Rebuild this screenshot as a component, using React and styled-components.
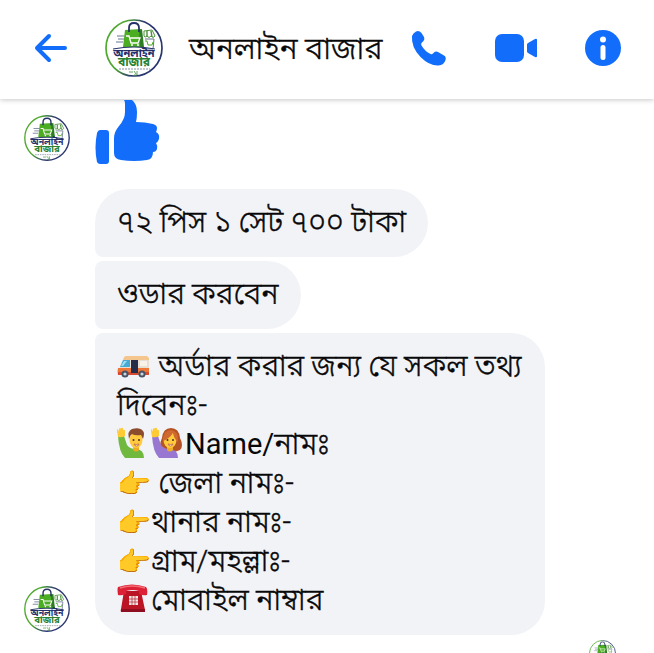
import React from 'react';
import styled, { createGlobalStyle } from 'styled-components';

const BLUE = '#126dfb';

const GlobalStyle = createGlobalStyle`
  *, *::before, *::after { box-sizing: border-box; }
  body {
    margin: 0;
    background: #fff;
    color: #080809;
    font-family: Roboto, "Noto Sans Bengali", "Noto Sans", sans-serif;
    font-weight: 300;
    -webkit-text-stroke: 0.4px;
  }
`;

const Page = styled.div`
  display: flex;
  flex-direction: column;
  height: 100vh;
  overflow: hidden;
`;

const Header = styled.header`
  display: flex;
  align-items: center;
  flex-shrink: 0;
  padding: 19px 33px 22px;
  background: #fff;
  box-shadow: 0 1px 5px rgba(0, 0, 0, 0.22);
`;

const IconButton = styled.button`
  display: flex;
  padding: 0;
  border: 0;
  background: none;
  color: ${BLUE};
  cursor: pointer;
`;

const Profile = styled.div`
  display: flex;
  flex: 1;
  align-items: center;
  gap: 26px;
  min-width: 0;
  margin-left: 36px;
`;

const Title = styled.h1`
  margin: 0;
  font-size: 31px;
  font-weight: 300;
  line-height: 39px;
  white-space: nowrap;
`;

const Actions = styled.nav`
  display: flex;
  align-items: center;
  gap: 48px;
`;

const Thread = styled.main`
  display: flex;
  flex: 1;
  flex-direction: column;
  gap: 25px;
  min-height: 0;
  padding: 1px 36px 0 24px;
`;

const MessageRow = styled.section`
  display: flex;
  flex-shrink: 0;
  align-items: flex-end;
  gap: 25px;
`;

const AvatarSvg = styled.svg`
  display: block;
  flex-shrink: 0;
  width: ${({ $size }) => $size}px;
  height: ${({ $size }) => $size}px;
  margin-bottom: ${({ $lift }) => ($lift ? 3 : 0)}px;
  -webkit-text-stroke: 0;
`;

const Stack = styled.div`
  display: flex;
  flex: 1;
  flex-direction: column;
  align-items: flex-start;
  gap: 4px;
  min-width: 0;
`;

const corners = {
  first: '34px 34px 34px 8px',
  middle: '8px 34px 34px 8px',
  last: '8px 34px 34px 34px',
};

const Bubble = styled.p`
  max-width: 450px;
  margin: 0;
  padding: 13px 22px 16px;
  border-radius: ${({ $place }) => corners[$place]};
  background: #f2f3f7;
  font-size: 30px;
  line-height: 39px;
`;

const Line = styled.span`
  display: block;
`;

const Latin = styled.span`
  font-size: 29px;
  font-weight: 400;
  line-height: 1;
  -webkit-text-stroke: 0;
`;

const Emoji = styled.span`
  font-size: 27px;
  line-height: 1;
`;

const EmojiSvg = styled.svg`
  width: 32px;
  height: 32px;
  margin-right: 2px;
  vertical-align: -5px;
`;

const Seen = styled.div`
  display: flex;
  justify-content: flex-end;
  flex-shrink: 0;
  margin-top: -20px;
  padding-right: 2px;
`;

function Avatar({ size, lift, id }) {
  return (
    <AvatarSvg $size={size} $lift={lift} viewBox="0 0 58 58" role="img" aria-label="অনলাইন বাজার">
      <defs>
        <linearGradient id={id} x1="0" y1="0" x2="1" y2="0.25">
          <stop offset="0.35" stopColor="#4fa82f" />
          <stop offset="0.65" stopColor="#29366f" />
        </linearGradient>
      </defs>
      <circle cx="29" cy="29" r="28" fill="#fff" stroke={`url(#${id})`} strokeWidth="1.7" />
      <path d="M12 17h8M13 20h6M11 23h7" stroke="#68728f" strokeWidth="1" />
      <path d="M20 11l16-1 1 18H18z" fill="#4bad22" />
      <path d="M34 11l3-1 2 18h-4z" fill="#2d7d25" />
      <path d="M24 13V9q0-5 5-5t5 5v4" fill="none" stroke="#253366" strokeWidth="1.8" />
      <path d="M21 17h3l2 7h7l2-5H25" fill="none" stroke="#fff" strokeWidth="1.3" />
      <circle cx="27" cy="26" r="1" fill="#fff" />
      <circle cx="33" cy="26" r="1" fill="#fff" />
      <path d="M39 12l8-1 3 6q-2 3-4 0-2 3-4 0-2 2-3 0z" fill="#fff" stroke="#4a9138" />
      <path d="M42 12v6M46 12l1 6" stroke="#4a9138" strokeWidth="1.4" />
      <path d="M40 20h9l-1 10h-8" fill="none" stroke="#68728f" />
      <path d="M40 22h2l1 4h4l1-3" fill="none" stroke="#4bad22" />
      <path d="M8 30q21-4 42 0" fill="none" stroke="#29366f" strokeWidth="1.2" />
      <text x="29" y="38" textAnchor="middle" fontSize="11" fontWeight="700" fontFamily='"Noto Sans Bengali", sans-serif' fill="#252e69">অনলাইন</text>
      <text x="29" y="47" textAnchor="middle" fontSize="12" fontWeight="700" fontFamily='"Noto Sans Bengali", sans-serif' fill="#28802e">বাজার</text>
      <path d="M14 50h31" stroke="#7c8798" strokeWidth="0.9" strokeDasharray="2 1" />
      <path d="M24 53h4m1-1l2 3m1-3v4h-3" fill="none" stroke="#519850" strokeWidth="0.9" />
    </AvatarSvg>
  );
}

const BackIcon = () => (
  <svg width="36" height="36" viewBox="0 0 36 36" fill="none" stroke="currentColor" strokeWidth="4" strokeLinecap="round" strokeLinejoin="round" aria-hidden="true">
    <path d="M16 6L4 18l12 12M4 18h28" />
  </svg>
);

const PhoneIcon = () => (
  <svg width="36" height="36" viewBox="0 0 36 36" fill="currentColor" aria-hidden="true">
    <path d="M1 6Q2 3 5 1.500Q8 0 10.500 3L13 7q1 2-.5 4l-2 2q-.7 1 0 2.500 3.500 6 9 8.500 1.500.7 2.500-.4l1-1q1.500-1.700 4-.6l6 3.500q2.500 1.500 1.500 4.500-1.500 5-7 5.500-9 .5-18-8.500Q0 17 1 6z" />
  </svg>
);

const VideoIcon = () => (
  <svg width="42" height="36" viewBox="0 0 42 36" fill="currentColor" aria-hidden="true">
    <rect x="0" y="4" width="29" height="28" rx="7" />
    <path d="M33 13l7-4q2-1 2 1v16q0 2-2 1l-7-4q-1-.6-1-1.500v-7q0-1 1-1.500z" />
  </svg>
);

const InfoIcon = () => (
  <svg width="36" height="36" viewBox="0 0 36 36" aria-hidden="true">
    <circle cx="18" cy="18" r="18" fill="currentColor" />
    <circle cx="18" cy="9.500" r="3" fill="#fff" />
    <rect x="15.500" y="15" width="5" height="15" rx="2.500" fill="#fff" />
  </svg>
);

const ThumbIcon = () => (
  <svg width="66" height="64" viewBox="0 0 66 64" fill={BLUE} role="img" aria-label="Like">
    <path d="M5 30h6q3 0 3 3v28q0 3-3 3H5q-2 0-3-2-3-14 0-29 1-3 3-3z" />
    <path d="M29 0h8q5 4 5 12 0 6-1 10 9 0 17 2 4 1 4 4 0 2-1 4 4 2 3 7-1 3-3 4 2 3 1 6-1 3-4 3 0 7-6 8-13 2-26 0-7-1-7-7V38q0-6 5-12 6-7 6-14V4q0-3-1-4z" />
  </svg>
);

const VanEmoji = () => (
  <EmojiSvg viewBox="0 0 32 32" role="img" aria-label="Van">
    <path d="M7 10q1-2 3-2h20q2 0 2 3v13H2l1-7z" fill="#e8dfd3" />
    <path d="M7 8q1-1 3-1h20l2 2v2H6z" fill="#f4c58d" />
    <path d="M1 19h31v7H1q-1-4 0-7z" fill="#ef7838" />
    <path d="M1 23h31v3H1z" fill="#d94b2e" />
    <path d="M6 11h7v7H3z" fill="#47a9d4" />
    <path d="M7 12h3l-4 5H4z" fill="#9de0f3" />
    <path d="M14 11h7v13h-7z" fill="#252c49" />
    <path d="M23 12h7v5h-7z" fill="#f8f2e8" />
    <circle cx="8" cy="25" r="3.500" fill="#465366" />
    <circle cx="25" cy="25" r="3.500" fill="#465366" />
    <circle cx="8" cy="25" r="1.600" fill="#ccd4dc" />
    <circle cx="25" cy="25" r="1.600" fill="#ccd4dc" />
  </EmojiSvg>
);

function PersonEmoji({ woman }) {
  return (
    <EmojiSvg viewBox="0 0 32 32" role="img" aria-label={woman ? 'Woman raising hand' : 'Man raising hand'}>
      {woman && <path d="M10 23Q8 17 11 11 12 1 20 1q8 0 9 10 4 8 0 12-8 4-19 0z" fill="#b65322" />}
      <path d="M1 9h6l3 9q3 4 8 4 9 0 9 9H8Q2 25 1 9z" fill={woman ? '#9877d2' : '#70b83e'} />
      <path d="M1 10L0 4q0-2 1-2l1 3V2q1-2 2 0V1q2-1 2 1v1q2-1 2 1v5q-3 2-7 1z" fill="#ffca33" />
      <path d="M16 18h6v5q-3 3-6 0z" fill="#ecad22" />
      <ellipse cx="19" cy="13" rx="6.500" ry="8" fill="#ffca3d" />
      {woman ? (
        <path d="M12 14q0-11 8-11 8 1 7 12-4-3-5-9-4 6-10 8z" fill="#cf6930" />
      ) : (
        <path d="M12 12Q10 4 15 2q8-2 11 2 2 2 0 8l-2-4q-6 1-9-1-2 1-3 5z" fill="#8b4c2d" />
      )}
      <circle cx="16.500" cy="13" r="1" fill="#4b3029" />
      <circle cx="22" cy="13" r="1" fill="#4b3029" />
      <path d="M17 17q2.500 1 5 0-.5 2-2.500 2T17 17z" fill="#fff" stroke="#b85032" strokeWidth="0.7" />
    </EmojiSvg>
  );
}

const TelephoneEmoji = () => (
  <EmojiSvg viewBox="0 0 32 32" role="img" aria-label="Telephone">
    <path d="M7 8h17l4 19q0 2-2 2H5q-2 0-1-3z" fill="#ba1425" />
    <path d="M1 4q14-5 28 0 2 2 1 8-4 1-8-1V8q-6-2-13 0v3q-4 2-8 1-1-6 0-8z" fill="#dc2136" />
    <path d="M3 5q12-4 25 0" fill="none" stroke="#f46b72" strokeWidth="1.5" />
    <path d="M4 26h24v3H4z" fill="#8f0f20" />
    <path d="M12 13h9v9h-9z" fill="#f5e6e4" />
    <path d="M15 13v9m3-9v9m-6-6h9m-9 3h9" stroke="#b43843" strokeWidth="0.8" />
  </EmojiSvg>
);

const Point = () => <Emoji>👉</Emoji>;

export default function App() {
  return (
    <>
      <GlobalStyle />
      <Page>
        <Header>
          <IconButton type="button" aria-label="Back"><BackIcon /></IconButton>
          <Profile>
            <Avatar size={58} id="ring-header" />
            <Title>অনলাইন বাজার</Title>
          </Profile>
          <Actions aria-label="Conversation actions">
            <IconButton type="button" aria-label="Call"><PhoneIcon /></IconButton>
            <IconButton type="button" aria-label="Video call"><VideoIcon /></IconButton>
            <IconButton type="button" aria-label="Information"><InfoIcon /></IconButton>
          </Actions>
        </Header>
        <Thread>
          <MessageRow>
            <Avatar size={46} lift id="ring-like" />
            <ThumbIcon />
          </MessageRow>
          <MessageRow>
            <Avatar size={46} lift id="ring-messages" />
            <Stack>
              <Bubble $place="first">৭২ পিস ১ সেট ৭০০ টাকা</Bubble>
              <Bubble $place="middle">ওডার করবেন</Bubble>
              <Bubble $place="last">
                <Line><VanEmoji /> অর্ডার করার জন্য যে সকল তথ্য দিবেনঃ-</Line>
                <Line><PersonEmoji /><PersonEmoji woman /><Latin>Name/</Latin>নামঃ</Line>
                <Line><Point /> জেলা নামঃ-</Line>
                <Line><Point />থানার নামঃ-</Line>
                <Line><Point />গ্রাম/মহল্লাঃ-</Line>
                <Line><TelephoneEmoji />মোবাইল নাম্বার</Line>
              </Bubble>
            </Stack>
          </MessageRow>
          <Seen><Avatar size={27} id="ring-seen" /></Seen>
        </Thread>
      </Page>
    </>
  );
}
